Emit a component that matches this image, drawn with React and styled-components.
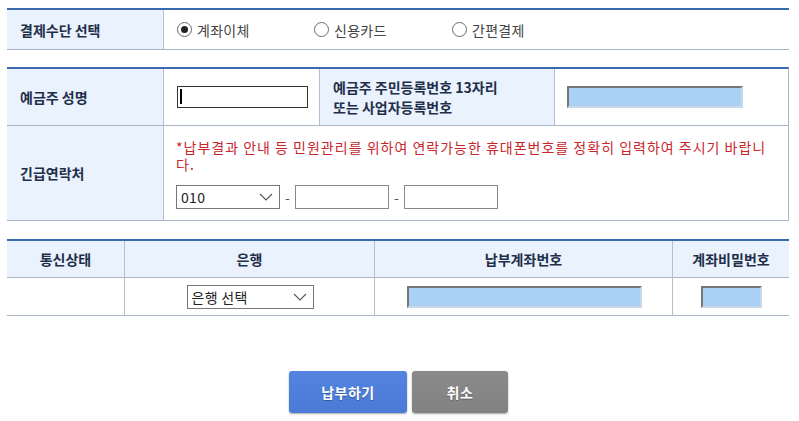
import React from 'react';
import styled, { createGlobalStyle, css } from 'styled-components';

const GlobalStyle = createGlobalStyle`
  html, body {
    margin: 0;
    padding: 0;
    background: #fff;
  }
  body {
    font-family: "Malgun Gothic", "Noto Sans CJK KR", "Noto Sans", sans-serif;
    font-size: 14px;
    color: #222;
  }
`;

const Page = styled.div`
  width: 799px;
  height: 421px;
  padding: 8px 10px 0 7px;
  box-sizing: border-box;
  display: flex;
  flex-direction: column;
`;

const Table = styled.div`
  display: grid;
  grid-template-columns: ${({ $cols }) => $cols};
  border-top: 2px solid #3a69b0;
  margin-bottom: ${({ $mb }) => $mb || 0}px;
  ${({ $boxed }) =>
    $boxed &&
    css`
      border-right: 1px solid #a9b5c7;
    `}
`;

const Cell = styled.div`
  display: flex;
  align-items: center;
  justify-content: ${({ $center }) => ($center ? 'center' : 'flex-start')};
  height: ${({ $h }) => $h}px;
  padding: ${({ $pad }) => ($pad === undefined ? '0 13px' : $pad)};
  box-sizing: border-box;
  border-bottom: 1px solid #a9b5c7;
  border-left: ${({ $first }) => ($first ? 'none' : '1px solid #b4c0d1')};
  background: ${({ $head }) => ($head ? '#e9f2fd' : '#fff')};
  font-weight: ${({ $head }) => ($head ? 700 : 400)};
  color: ${({ $head }) => ($head ? '#1f2f4a' : '#333')};
  line-height: 20px;
`;

const Radios = styled.div`
  display: flex;
  align-items: center;
`;

const RadioItem = styled.label`
  display: flex;
  align-items: center;
  width: ${({ $w }) => $w}px;
  color: #444;
  letter-spacing: 0.3px;
`;

const RadioCircle = styled.span`
  width: 15px;
  height: 15px;
  border: 1px solid #6a6a6a;
  border-radius: 50%;
  box-sizing: border-box;
  margin-right: 5px;
  display: flex;
  align-items: center;
  justify-content: center;
  &::after {
    content: '';
    display: ${({ $on }) => ($on ? 'block' : 'none')};
    width: 7px;
    height: 7px;
    border-radius: 50%;
    background: #222;
  }
`;

const TextInput = styled.input`
  box-sizing: border-box;
  width: ${({ $w }) => $w}px;
  height: ${({ $h }) => $h || 22}px;
  margin: 0;
  padding: 0 4px;
  font: inherit;
  outline: none;
  ${({ $blue }) =>
    $blue
      ? css`
          background: #aad0f5;
          border: 2px solid;
          border-color: #767676 #c8d8ea #c8d8ea #767676;
        `
      : css`
          background: #fff;
          border: 1px solid ${({ $dark }) => ($dark ? '#333' : '#888')};
        `}
`;

const CaretWrap = styled.div`
  position: relative;
  display: flex;
`;

const Caret = styled.span`
  position: absolute;
  left: 3px;
  top: 3px;
  width: 2px;
  height: 15px;
  background: #000;
`;

const Select = styled.div`
  box-sizing: border-box;
  width: ${({ $w }) => $w}px;
  height: 24px;
  border: 1px solid #777;
  display: flex;
  align-items: center;
  justify-content: space-between;
  padding: 0 6px 0 4px;
  color: #222;
  background: #fff;
  letter-spacing: 0.3px;
`;

const Arrow = () => (
  <svg width="14" height="8" viewBox="0 0 14 8">
    <polyline points="1,1 7,7 13,1" fill="none" stroke="#555" strokeWidth="1.1" />
  </svg>
);

const Stack = styled.div`
  display: flex;
  flex-direction: column;
  gap: 12px;
  padding-top: 2px;
`;

const Notice = styled.div`
  color: #c8262b;
  width: 596px;
  line-height: 17px;
  letter-spacing: 1px;
  word-break: break-all;
`;

const PhoneRow = styled.div`
  display: flex;
  align-items: center;
`;

const Dash = styled.span`
  width: 15px;
  text-align: center;
  color: #555;
`;

const LabelTwo = styled.div`
  line-height: 20px;
`;

const Buttons = styled.div`
  display: flex;
  justify-content: center;
  gap: 5px;
  margin-top: 55px;
  padding-left: 1px;
`;

const Button = styled.button`
  width: ${({ $w }) => $w}px;
  height: 42px;
  border: none;
  border-radius: 3px;
  font: inherit;
  font-weight: 700;
  font-size: 14px;
  letter-spacing: 0.5px;
  color: #fff;
  background: ${({ $gray }) =>
    $gray ? 'linear-gradient(#8a8a8a, #828282)' : 'linear-gradient(#5284e0, #4a7ad6)'};
  box-shadow: 0 1px 2px rgba(0, 0, 0, 0.35);
  text-shadow: 0 1px 1px rgba(0, 0, 0, 0.3);
`;

export default function App() {
  return (
    <Page>
      <GlobalStyle />
      <Table $cols="156px 1fr" $mb={17}>
        <Cell $head $first $h={40}>결제수단 선택</Cell>
        <Cell $h={40}>
          <Radios>
            <RadioItem $w={137}>
              <RadioCircle $on />
              계좌이체
            </RadioItem>
            <RadioItem $w={138}>
              <RadioCircle />
              신용카드
            </RadioItem>
            <RadioItem $w={100}>
              <RadioCircle />
              간편결제
            </RadioItem>
          </Radios>
        </Cell>
      </Table>

      <Table $cols="156px 156px 235px 1fr" $boxed $mb={18}>
        <Cell $head $first $h={57}>예금주 성명</Cell>
        <Cell $h={57}>
          <CaretWrap>
            <TextInput $w={131} $dark />
            <Caret />
          </CaretWrap>
        </Cell>
        <Cell $head $h={57}>
          <LabelTwo>
            예금주 주민등록번호 13자리
            <br />
            또는 사업자등록번호
          </LabelTwo>
        </Cell>
        <Cell $h={57} $pad="0 0 0 12px">
          <TextInput $w={176} $blue />
        </Cell>
        <Cell $head $first $h={95}>긴급연락처</Cell>
        <Cell $h={95} $pad="0 0 0 12px" style={{ gridColumn: '2 / 5' }}>
          <Stack>
            <Notice>
              *납부결과 안내 등 민원관리를 위하여 연락가능한 휴대폰번호를 정확히 입력하여 주시기 바랍니다.
            </Notice>
            <PhoneRow>
              <Select $w={104}>
                010
                <Arrow />
              </Select>
              <Dash>-</Dash>
              <TextInput $w={94} $h={24} />
              <Dash>-</Dash>
              <TextInput $w={94} $h={24} />
            </PhoneRow>
          </Stack>
        </Cell>
      </Table>

      <Table $cols="117px 250px 298px 1fr">
        <Cell $head $first $center $h={37}>통신상태</Cell>
        <Cell $head $center $h={37}>은행</Cell>
        <Cell $head $center $h={37}>납부계좌번호</Cell>
        <Cell $head $center $h={37}>계좌비밀번호</Cell>
        <Cell $first $h={38} />
        <Cell $center $h={38} $pad="0 0 0 1px">
          <Select $w={127}>
            은행 선택
            <Arrow />
          </Select>
        </Cell>
        <Cell $center $h={38} $pad="0 0 0 1px">
          <TextInput $w={235} $blue />
        </Cell>
        <Cell $center $h={38} $pad="0 0 0 1px">
          <TextInput $w={61} $blue />
        </Cell>
      </Table>

      <Buttons>
        <Button $w={118}>납부하기</Button>
        <Button $w={96} $gray>취소</Button>
      </Buttons>
    </Page>
  );
}
